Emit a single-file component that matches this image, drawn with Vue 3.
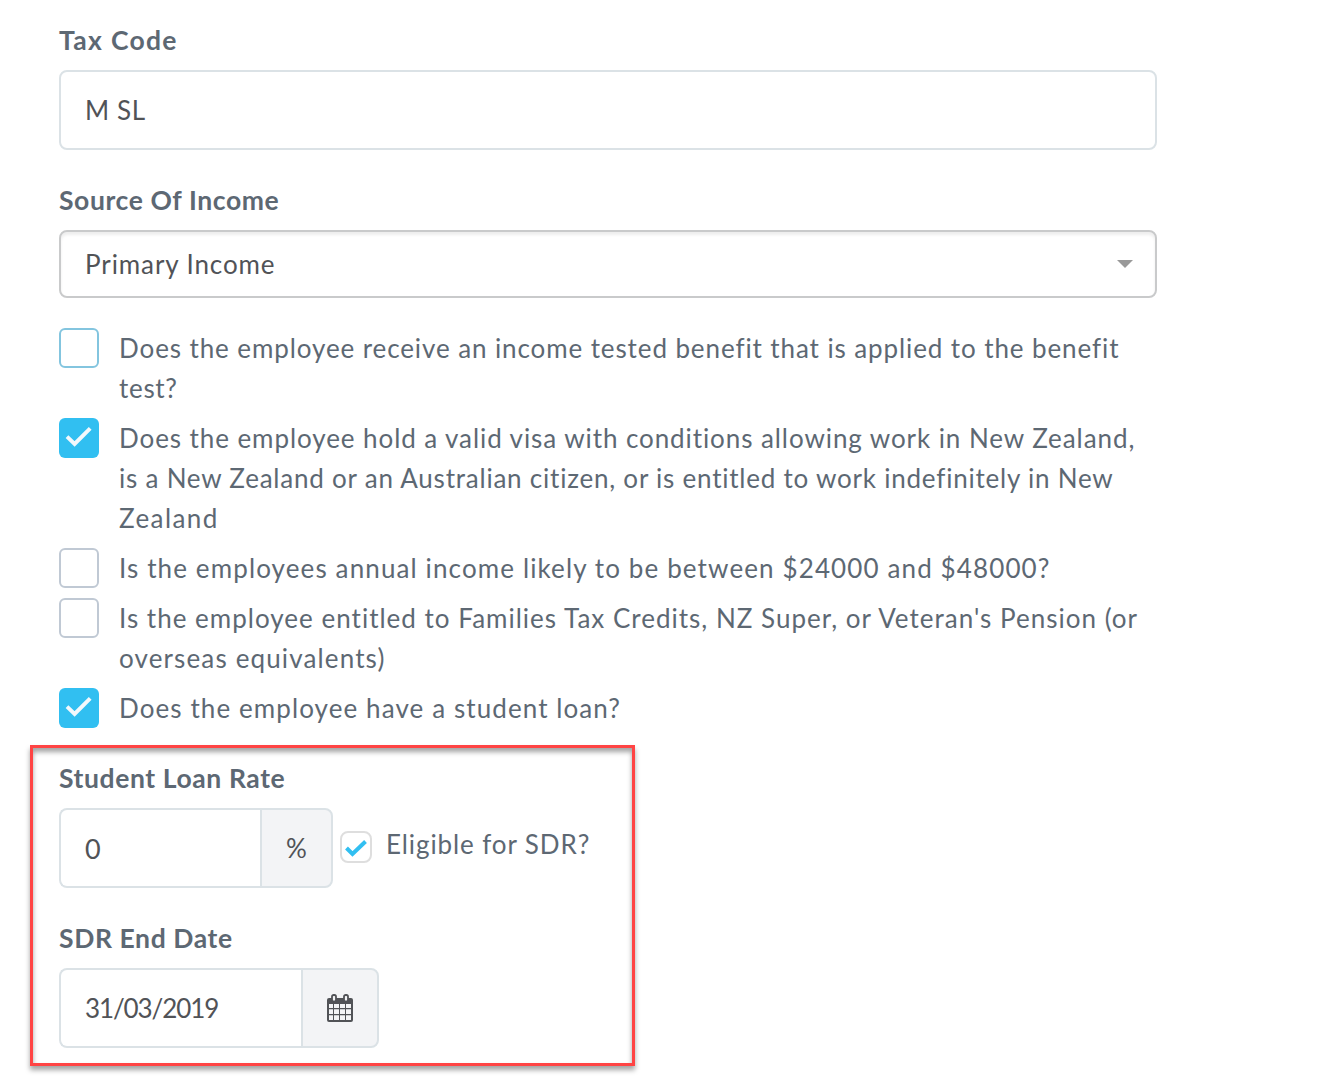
<template>
  <form class="tax-form" @submit.prevent>
    <div class="field">
      <label class="field-label tax-label" for="tax-code">Tax Code</label>
      <input id="tax-code" v-model="form.taxCode" class="form-control tax-code" type="text" />
    </div>

    <div class="field">
      <span class="field-label">Source Of Income</span>
      <div class="select-box">
        <span>{{ form.source }}</span>
        <i class="caret"></i>
      </div>
    </div>

    <div class="questions">
      <div
        v-for="q in questions"
        :key="q.id"
        class="question"
        @click="q.checked = !q.checked"
      >
        <span class="checkbox" :class="{ checked: q.checked, hovered: q.hovered }">
          <svg v-if="q.checked" viewBox="0 0 40 40">
            <path d="M8 18.7L15.6 26L31.2 10.4" fill="none" stroke="#f3f8fc" stroke-width="3.9" />
          </svg>
        </span>
        <span class="question-text">
          <span
            v-for="line in q.lines"
            :key="line.text"
            class="line"
            :style="{ letterSpacing: line.spacing + 'px' }"
            >{{ line.text }}</span
          >
        </span>
      </div>
    </div>

    <section class="loan-panel">
      <div class="field">
        <label class="field-label" for="rate">Student Loan Rate</label>
        <div class="rate-row">
          <div class="input-group rate-group">
            <input id="rate" v-model="form.rate" class="form-control rate" type="text" />
            <span class="addon">%</span>
          </div>
          <span class="small-check">
            <svg viewBox="0 0 32 32">
              <path d="M6.5 17L12.5 23L25.5 10.5" fill="none" stroke="#31bff1" stroke-width="4" />
            </svg>
          </span>
          <span class="sdr-text">Eligible for SDR?</span>
        </div>
      </div>

      <div class="field">
        <label class="field-label" for="sdr-date">SDR End Date</label>
        <div class="input-group date-group">
          <input id="sdr-date" v-model="form.endDate" class="form-control date" type="text" />
          <span class="addon">
            <svg class="calendar" viewBox="0 0 26 28">
              <path
                fill="#515357"
                fill-rule="evenodd"
                d="M2 4H24Q26 4 26 6V26Q26 28 24 28H2Q0 28 0 26V6Q0 4 2 4ZM2 10V14H6V10ZM7 10V14H12V10ZM13 10V14H18V10ZM19 10V14H24V10ZM2 15.3V20H6V15.3ZM7 15.3V20H12V15.3ZM13 15.3V20H18V15.3ZM19 15.3V20H24V15.3ZM2 21.3V26H6V21.3ZM7 21.3V26H12V21.3ZM13 21.3V26H18V21.3ZM19 21.3V26H24V21.3Z"
              />
              <rect x="5" y="1" width="4" height="6.5" rx="1.6" fill="#f3f4f6" stroke="#515357" stroke-width="1.8" />
              <rect x="17" y="1" width="4" height="6.5" rx="1.6" fill="#f3f4f6" stroke="#515357" stroke-width="1.8" />
            </svg>
          </span>
        </div>
      </div>
    </section>
  </form>
</template>

<script setup>
import { reactive } from 'vue'

const form = reactive({
  taxCode: 'M SL',
  source: 'Primary Income',
  rate: '0',
  endDate: '31/03/2019',
})

const questions = reactive([
  {
    id: 'benefit',
    checked: false,
    hovered: true,
    lines: [
      { text: 'Does the employee receive an income tested benefit that is applied to the benefit', spacing: 0.9 },
      { text: 'test?', spacing: 0.7 },
    ],
  },
  {
    id: 'visa',
    checked: true,
    lines: [
      { text: 'Does the employee hold a valid visa with conditions allowing work in New Zealand,', spacing: 0.92 },
      { text: 'is a New Zealand or an Australian citizen, or is entitled to work indefinitely in New', spacing: 0.78 },
      { text: 'Zealand', spacing: 1.4 },
    ],
  },
  {
    id: 'income',
    checked: false,
    lines: [{ text: 'Is the employees annual income likely to be between $24000 and $48000?', spacing: 1.12 }],
  },
  {
    id: 'credits',
    checked: false,
    lines: [
      { text: "Is the employee entitled to Families Tax Credits, NZ Super, or Veteran's Pension (or", spacing: 1.01 },
      { text: 'overseas equivalents)', spacing: 1.14 },
    ],
  },
  {
    id: 'loan',
    checked: true,
    lines: [{ text: 'Does the employee have a student loan?', spacing: 1.09 }],
  },
])
</script>

<style>
body {
  margin: 0;
  background: #fff;
}
</style>

<style scoped>
.tax-form {
  box-sizing: border-box;
  width: 1341px;
  height: 1080px;
  padding: 20px 184px 0 59px;
  overflow: hidden;
  font-family: Lato, 'Open Sans', sans-serif;
  font-size: 26px;
  line-height: 40px;
  color: #5d6873;
}

.tax-form *,
.tax-form *::before {
  box-sizing: border-box;
}

.field-label {
  display: block;
  width: max-content;
  height: 40px;
  margin-bottom: 10px;
  font-size: 26.5px;
  font-weight: 700;
  letter-spacing: 0.6px;
  line-height: 40px;
}

.tax-label {
  letter-spacing: 1.3px;
}

.form-control {
  display: block;
  width: 100%;
  height: 80px;
  padding: 0 24px;
  border: 2px solid #dbe2e6;
  border-radius: 8px;
  outline: 0;
  background: #fff;
  color: #515357;
  font: inherit;
}

.form-control.tax-code {
  letter-spacing: 0.6px;
}

.form-control.date {
  letter-spacing: -1.1px;
}

.form-control.rate {
  font-size: 27px;
}

.field + .field {
  margin-top: 30px;
}

/* Select */
.select-box {
  display: flex;
  align-items: center;
  justify-content: space-between;
  height: 68px;
  padding: 0 22px 0 24px;
  border: 2px solid #c9cacb;
  border-radius: 8px;
  box-shadow: inset 0 3px 3px rgba(0, 0, 0, 0.07);
  color: #515357;
  letter-spacing: 0.9px;
}

.caret {
  border-top: 8px solid #999;
  border-right: 8px solid transparent;
  border-left: 8px solid transparent;
}

/* Questions */
.questions {
  display: flex;
  flex-direction: column;
  gap: 10px;
  margin-top: 30px;
}

.question {
  display: flex;
  gap: 20px;
}

.checkbox {
  flex: none;
  width: 40px;
  height: 40px;
  border: 2px solid #c0c9d4;
  border-radius: 6px;
}

.checkbox.hovered {
  border-color: #83c5df;
}

.checkbox.checked {
  border: 0;
  background: #31bff1;
}

.checkbox svg {
  display: block;
}

.line {
  display: block;
  width: max-content;
  height: 40px;
  line-height: 40px;
  white-space: nowrap;
}

/* Highlighted student loan block */
.loan-panel {
  width: 605px;
  height: 321px;
  margin: 17px 0 0 -29px;
  padding: 10px 26px 0;
  border: 3px solid #ff4444;
  box-shadow:
    0 4px 5px rgba(0, 0, 0, 0.36),
    inset 0 4px 5px rgba(0, 0, 0, 0.36);
}

.rate-row {
  display: flex;
  align-items: center;
}

.input-group {
  display: flex;
  height: 80px;
}

.rate-group {
  width: 274px;
}

.date-group {
  width: 320px;
}

.input-group .form-control {
  flex: 1;
  min-width: 0;
  border-right: 0;
  border-radius: 8px 0 0 8px;
}

.addon {
  display: flex;
  align-items: center;
  justify-content: center;
  width: 73px;
  border: 2px solid #dbe2e6;
  border-radius: 0 8px 8px 0;
  background: #f3f4f6;
  color: #515357;
}

.date-group .addon {
  width: 78px;
}

.calendar {
  width: 26px;
  height: 28px;
}

.small-check {
  width: 32px;
  height: 32px;
  margin: -2px 14px 0 7px;
  border: 2px solid #dedede;
  border-radius: 8px;
}

.small-check svg {
  display: block;
  width: 32px;
  height: 32px;
  margin: -2px;
}

.sdr-text {
  margin-top: -8px;
  letter-spacing: 0.9px;
}
</style>
